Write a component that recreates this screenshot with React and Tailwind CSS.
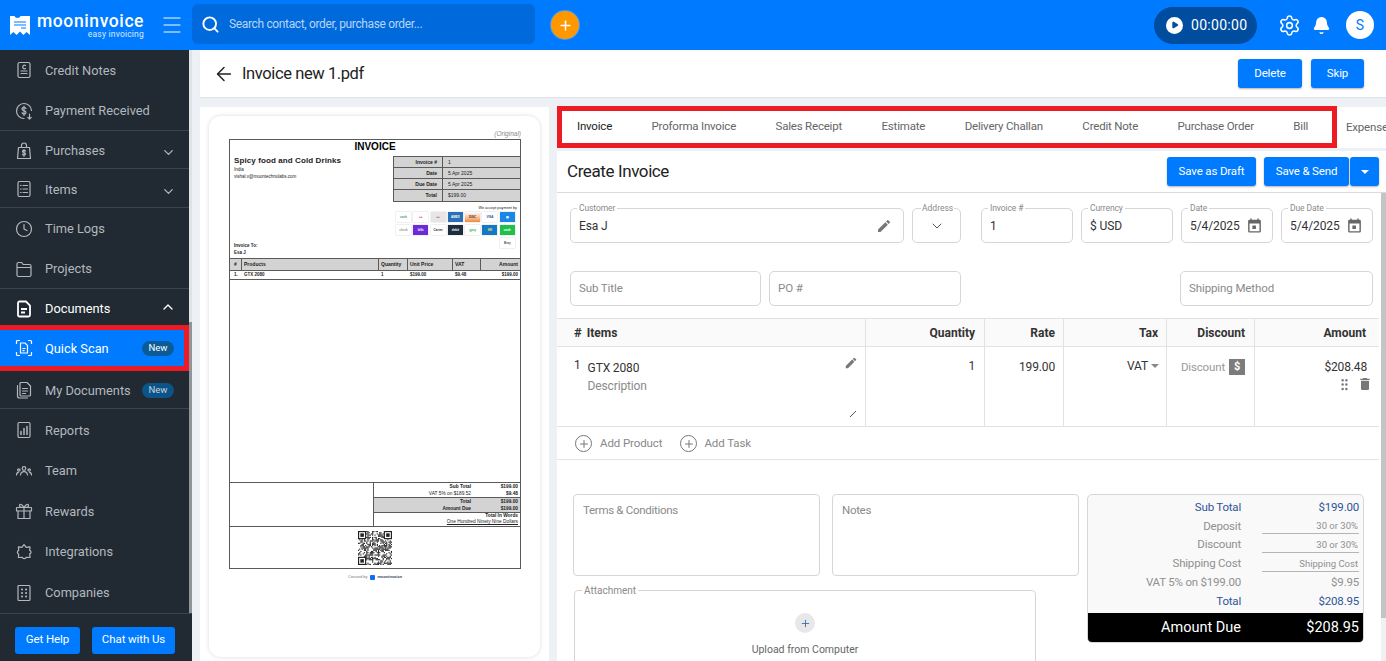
import React from "react";
import {
  ArrowLeft,
  Bell,
  ChevronDown,
  ChevronUp,
  GripVertical,
  Menu,
  Play,
  Plus,
  Search,
  Settings,
} from "lucide-react";

const Ico = ({ children, size = 20, className = "" }) => (
  <svg
    width={size}
    height={size}
    viewBox="0 0 20 20"
    fill="none"
    stroke="currentColor"
    strokeWidth="1.2"
    strokeLinecap="round"
    strokeLinejoin="round"
    className={className}
  >
    {children}
  </svg>
);

const Mat = ({ d, size = 16, className = "" }) => (
  <svg width={size} height={size} viewBox="0 0 24 24" fill="currentColor" className={className}>
    <path d={d} />
  </svg>
);

const EDIT =
  "M3 17.25V21h3.75L17.81 9.94l-3.75-3.75L3 17.25zM20.71 7.04a1 1 0 0 0 0-1.41l-2.34-2.34a1 1 0 0 0-1.41 0l-1.83 1.83 3.75 3.75 1.83-1.83z";
const EVENT =
  "M19 4h-1V2h-2v2H8V2H6v2H5a2 2 0 0 0-2 2v14a2 2 0 0 0 2 2h14a2 2 0 0 0 2-2V6a2 2 0 0 0-2-2zm0 16H5V9h14v11zM9 12h5v5H9z";
const TRASH = "M6 19c0 1.1.9 2 2 2h8c1.1 0 2-.9 2-2V7H6v12zM19 4h-3.5l-1-1h-5l-1 1H5v2h14V4z";

const icons = {
  credit: (
    <Ico>
      <rect x="4" y="2.5" width="12" height="15" rx="1.5" />
      <path d="M11.5 5.5a1.8 1.8 0 1 0 0 3M7 11h6M7 13.5h6" />
    </Ico>
  ),
  payment: (
    <Ico>
      <path d="M17.5 9.5A7.5 7.5 0 1 0 10 17.5" />
      <path d="M12 7.5c-.4-.8-1.1-1.2-2-1.2-1.2 0-2 .6-2 1.6s.8 1.4 2 1.7 2 .8 2 1.8-.9 1.6-2 1.6c-.9 0-1.7-.4-2-1.2M10 5v9.5M15.5 13v5M13.8 16.4l1.7 1.6 1.7-1.6" />
    </Ico>
  ),
  purchases: (
    <Ico>
      <path d="M4.5 6.5h11l1 11h-13zM7.5 6.5V4.5a2.5 2.5 0 0 1 5 0v2" />
      <path d="M11.5 10c-.3-.5-.8-.8-1.5-.8-.9 0-1.5.5-1.5 1.2s.6 1 1.5 1.2 1.5.6 1.5 1.3-.7 1.2-1.5 1.2c-.7 0-1.2-.3-1.5-.9M10 8.5v6.8" />
    </Ico>
  ),
  items: (
    <Ico>
      <rect x="4" y="2.5" width="12" height="15" rx="1.5" />
      <path d="M6.5 6.5h.6M9 6.5h4.5M6.5 10h.6M9 10h4.5M6.5 13.5h.6M9 13.5h4.5" />
    </Ico>
  ),
  time: (
    <Ico>
      <circle cx="10" cy="10" r="7.5" />
      <path d="M10 5.5V10l3 1.5" />
    </Ico>
  ),
  projects: (
    <Ico>
      <path d="M3 16V5a1.5 1.5 0 0 1 1.5-1.5h3.2l1.5 2h6.3A1.5 1.5 0 0 1 17 7v9a1.5 1.5 0 0 1-1.5 1.5h-11A1.5 1.5 0 0 1 3 16zM3 8.5h14" />
    </Ico>
  ),
  documents: (
    <svg width="20" height="20" viewBox="0 0 20 20" fill="none">
      <path d="M5 2.5h7l4 4V16a1.5 1.5 0 0 1-1.5 1.5h-9A1.5 1.5 0 0 1 4 16V4a1.5 1.5 0 0 1 1-1.5z" stroke="#fff" strokeWidth="1.8" />
      <path d="M7 10h6M7 13.5h4" stroke="#fff" strokeWidth="1.8" />
    </svg>
  ),
  scan: (
    <svg width="20" height="20" viewBox="0 0 20 20" fill="none" stroke="#fff" strokeWidth="1.2">
      <path d="M2.5 6V3.5a1 1 0 0 1 1-1H6M14 2.5h2.5a1 1 0 0 1 1 1V6M17.5 14v2.5a1 1 0 0 1-1 1H14M6 17.5H3.5a1 1 0 0 1-1-1V14" />
      <path d="M6.5 5H11l2.5 2.5V15h-7zM8.5 10.5h3M8.5 12.7h2" />
    </svg>
  ),
  mydocs: (
    <Ico>
      <path d="M7 2.5h6L16.5 6v9a1 1 0 0 1-1 1H7a1 1 0 0 1-1-1V3.5a1 1 0 0 1 1-1zM3.5 5.5V16a2 2 0 0 0 2 2h8M8.5 8.5h5M8.5 11h5M8.5 13.5h3" />
    </Ico>
  ),
  reports: (
    <Ico>
      <rect x="4" y="2.5" width="12" height="15" rx="1.2" />
      <path d="M7 14.5v-3M10 14.5v-6M13 14.5v-8" strokeWidth="1.5" />
    </Ico>
  ),
  team: (
    <Ico>
      <circle cx="10" cy="7.5" r="1.8" />
      <circle cx="4.8" cy="9" r="1.2" />
      <circle cx="15.2" cy="9" r="1.2" />
      <path d="M6.5 14c.2-2.2 1.6-3.3 3.5-3.3s3.3 1.1 3.5 3.3M2.5 14c0-1.5.7-2.5 2-2.7M17.5 14c0-1.5-.7-2.5-2-2.7" />
    </Ico>
  ),
  rewards: (
    <Ico>
      <rect x="2.5" y="6.5" width="15" height="3.5" rx=".6" />
      <path d="M4 10v7.5h12V10M10 6.5v11M10 6.5C8 3 5.5 2.5 5.5 4.7c0 1.3 2 1.8 4.5 1.8zM10 6.5c2-3.5 4.5-4 4.5-1.8 0 1.3-2 1.8-4.5 1.8z" />
    </Ico>
  ),
  integrations: (
    <Ico>
      <path d="M10 2.5l2.2 2.8 3.8-.5-.3 3.6c1.8.6 1.8 3 0 3.5l.3 3.6-3.8-.2c-.6 1.7-3.4 1.7-4 0l-3.8.2.3-3.3c-1.8-.6-1.8-3.2 0-3.8l-.3-3.6 3.5.5z" />
    </Ico>
  ),
  companies: (
    <Ico>
      <rect x="4" y="2.5" width="12" height="15" rx="1" />
      <path d="M8 6.5h.1M12 6.5h.1M8 10h.1M12 10h.1M8 13.5h.1M12 13.5h.1" strokeWidth="2" />
    </Ico>
  ),
};

const Row = ({ icon, label, border, h = "h-[40.6px]", pt = "pt-[1px]", chevron, badge }) => (
  <div
    className={`flex items-center shrink-0 pl-[14px] pr-[13px] text-[12.8px] text-[#b3b8bd] ${h} ${pt} ${
      border ? "border-b border-[#3b444e]" : ""
    }`}
  >
    <span className="w-[31px] shrink-0">{icons[icon]}</span>
    <span className="flex-1 whitespace-nowrap">{label}</span>
    {badge && (
      <span className="rounded-full bg-[#0b5488] text-[#c5d3df] text-[9.5px] h-[15px] w-[32px] mr-[2px] flex items-center justify-center">
        New
      </span>
    )}
    {chevron && <ChevronDown size={15} className="mt-1" />}
  </div>
);

function Sidebar() {
  return (
    <aside className="w-[192px] shrink-0 flex flex-col bg-[#212a33] font-['Roboto',sans-serif]">
      <div className="flex flex-1 min-h-0">
        <nav className="w-[189px] flex flex-col overflow-hidden">
          <Row icon="credit" label="Credit Notes" pt="pt-0" />
          <Row icon="payment" label="Payment Received" border />
          <Row icon="purchases" label="Purchases" border chevron h="h-[38px]" pt="pt-[2px]" />
          <Row icon="items" label="Items" border chevron h="h-[39px]" pt="pt-[2px]" />
          <Row icon="time" label="Time Logs" />
          <Row icon="projects" label="Projects" border />
          <div className="h-[36px] shrink-0 flex items-center pt-[3px] pl-[14px] pr-[13px] text-[12.8px] text-white">
            <span className="w-[31px]">{icons.documents}</span>
            <span className="flex-1">Documents</span>
            <ChevronUp size={16} className="-mt-1" />
          </div>
          <div className="h-[46px] shrink-0 border-[5px] border-l-0 border-[#ed1c24] bg-[#007bff] flex items-center pl-[14px] pr-[10px] text-[12.8px] text-white">
            <span className="w-[31px]">{icons.scan}</span>
            <span className="flex-1">Quick Scan</span>
            <span className="rounded-full bg-[#0b5c96] text-white text-[9.5px] h-[15px] w-[32px] flex items-center justify-center">
              New
            </span>
          </div>
          <Row icon="mydocs" label="My Documents" border badge h="h-[38px]" />
          <Row icon="reports" label="Reports" />
          <Row icon="team" label="Team" />
          <Row icon="rewards" label="Rewards" />
          <Row icon="integrations" label="Integrations" />
          <Row icon="companies" label="Companies" pt="pt-[2px]" />
        </nav>
        <div className="w-[3px] flex flex-col">
          <div className="h-[272px] bg-[#dfe3e8]" />
          <div className="flex-1 bg-[#8f9499]" />
        </div>
      </div>
      <div className="h-[48px] shrink-0 border-t border-[#3b444e] flex items-center pt-[5px] pl-[15px] gap-[12px] text-[11.5px] tracking-[-0.1px] text-white">
        <button className="w-[65px] h-[27px] rounded-[3px] bg-[#007bff]">Get Help</button>
        <button className="w-[83px] h-[27px] rounded-[3px] bg-[#007bff]">Chat with Us</button>
      </div>
    </aside>
  );
}

function Header() {
  return (
    <header className="h-[50px] shrink-0 bg-[#007bff] flex items-center font-['Roboto',sans-serif] text-white">
      <svg width="20" height="21" viewBox="0 0 20 21" className="ml-[10px] mt-[1px]">
        <path d="M0 1h4.5C5 2 6 3 7.5 3S10 2 10.5 1H20v19l-3.5-3-3 3L10 16.5 6.5 20l-3-3L0 20z" fill="#fff" />
        <path d="M4 7h12M4 10h12M11 13h5" stroke="#007bff" strokeWidth="1.2" />
      </svg>
      <div className="ml-[7px] w-[116px] leading-none">
        <div className="text-[17.5px] font-medium tracking-[0.6px] leading-[17px] mt-[1px]">mooninvoice</div>
        <div className="text-[8.5px] text-right pr-[9px] tracking-[0.2px] leading-[9px] text-[#dbeaff]">
          easy invoicing
        </div>
      </div>
      <Menu size={24} strokeWidth={1} className="ml-[7px]" />
      <div className="ml-[8px] -mt-[2px] w-[343px] h-[40px] rounded-[6px] bg-[#0069dc] flex items-center pl-[9px]">
        <Search size={19} strokeWidth={2.4} />
        <span className="ml-[9px] text-[12px] tracking-[-0.35px] text-[#b7d5f8]">Search contact, order, purchase order...</span>
      </div>
      <div className="ml-[16px] w-[28px] h-[28px] rounded-full bg-[#ff9800] flex items-center justify-center shadow-[0_0_0_1px_rgba(255,255,255,.25)]">
        <Plus size={15} strokeWidth={2.4} />
      </div>
      <div className="ml-auto w-[103px] h-[37px] rounded-full bg-[#004d9f] flex items-center pl-[12px]">
        <span className="w-[17px] h-[17px] rounded-full bg-white flex items-center justify-center">
          <Play size={8} fill="#004d9f" stroke="#004d9f" />
        </span>
        <span className="ml-[8px] text-[14px] tracking-[0.3px]">00:00:00</span>
      </div>
      <Settings size={23} strokeWidth={1.6} className="ml-[21px]" />
      <Bell size={19} fill="#fff" strokeWidth={1.5} className="ml-[11px]" />
      <div className="ml-[15px] mr-[12px] w-[28px] h-[28px] rounded-full bg-white text-[#007bff] text-[14px] flex items-center justify-center">
        S
      </div>
    </header>
  );
}

// tiny payment logos on the scanned pdf
const cards = [
  ["bg-white text-[#3a9d8f]", "cash"],
  ["bg-white text-[#c33]", "●●"],
  ["bg-[#e6e6e6] text-[#e2401b]", "●●"],
  ["bg-[#2a70b8] text-white", "AMEX"],
  ["bg-gradient-to-b from-white to-[#f08a2c] text-[#333]", "DISC"],
  ["bg-white text-[#2a4a9a]", "VISA"],
  ["bg-[#1a86e8] text-white", "▣"],
  ["bg-white text-[#999]", "check"],
  ["bg-[#6c2bd9] text-white", "bills"],
  ["bg-white text-[#234]", "Cartes"],
  ["bg-[#1d2d3e] text-white", "debit"],
  ["bg-white text-[#3fb56a]", "gpay"],
  ["bg-[#1478c8] text-[#ffe24a]", "HK"],
  ["bg-[#1fbf4c] text-white", "cash"],
];

const Card = ({ c, t }) => (
  <div className={`w-[15px] h-[10px] flex items-center justify-center text-[3px] font-bold overflow-hidden shadow-[0_0_1px_rgba(0,0,0,.35)] ${c}`}>
    {t}
  </div>
);

function QR() {
  const n = 29;
  const cells = [];
  let s = 97;
  const finder = (x, y) => x < 7 && y < 7;
  for (let y = 0; y < n; y++) {
    for (let x = 0; x < n; x++) {
      s = (s * 1103515245 + 12345) & 0x7fffffff;
      const inF = finder(x, y) || finder(n - 1 - x, y) || finder(x, n - 1 - y);
      if (!inF && (s >> 16) % 2 === 0) cells.push(<rect key={x + "-" + y} x={x} y={y} width="1" height="1" />);
    }
  }
  const F = ({ x, y }) => (
    <g>
      <rect x={x} y={y} width="7" height="7" />
      <rect x={x + 1} y={y + 1} width="5" height="5" fill="#fff" />
      <rect x={x + 2} y={y + 2} width="3" height="3" />
    </g>
  );
  return (
    <svg width="34" height="34" viewBox="0 0 29 29" fill="#222">
      {cells}
      <F x={0} y={0} />
      <F x={22} y={0} />
      <F x={0} y={22} />
    </svg>
  );
}

function PdfDoc() {
  const grey = "bg-[#d3d3d3]";
  const line = "border-[#5a5a5a]";
  return (
    <div className="w-[292px] pt-[13px] font-['Liberation_Sans',sans-serif] text-[#222]">
      <div className="text-right text-[6.5px] italic text-[#888] h-[10px] leading-[10px]">(Original)</div>
      <div className={`h-[430px] border ${line} flex flex-col`}>
        <div className="h-[16px] text-center text-[10px] font-bold leading-[13px] text-black">INVOICE</div>
        <div className="h-[102px] flex">
          <div className="flex-1 pl-[4px] flex flex-col">
            <div className="text-[8px] font-bold leading-[10px] tracking-[0.1px]">Spicy food and Cold Drinks</div>
            <div className="text-[4.5px] leading-[6.5px] mt-[1px]">India</div>
            <div className="text-[4.5px] leading-[6.5px]">vishal.v@moontechnolabs.com</div>
            <div className="mt-auto mb-[2px] text-[4.5px] font-bold leading-[7px]">
              Invoice To:
              <br />
              Esa J
            </div>
          </div>
          <div className="w-[127px]">
            <div className={`border-l border-b border-t ${line} ${grey}`}>
              {[
                ["Invoice #", "1"],
                ["Date", "5 Apr 2025"],
                ["Due Date", "5 Apr 2025"],
                ["Total", "$199.00"],
              ].map(([a, b], i) => (
                <div key={a} className={`flex h-[11px] text-[5px] leading-[10px] ${i < 3 ? `border-b ${line}` : ""}`}>
                  <div className={`w-[49px] text-right pr-[5px] font-bold border-r ${line}`}>{a}</div>
                  <div className="pl-[5px]">{b}</div>
                </div>
              ))}
            </div>
            <div className="text-right text-[3.8px] pr-[3px] mt-[3px] leading-[6px]">We accept payment by</div>
            <div className="grid grid-cols-[repeat(7,15px)] gap-x-[2.3px] gap-y-[3px] pl-[3px] mt-[1px]">
              {cards.map(([c, t], i) => (
                <Card key={i} c={c} t={t} />
              ))}
              <div className="col-start-7">
                <Card c="bg-white text-[#555]" t="Bray" />
              </div>
            </div>
          </div>
        </div>
        <div className={`grid grid-cols-[12px_137px_29px_45px_28px_1fr] h-[13px] ${grey} border-y ${line} text-[5px] font-bold leading-[11px]`}>
          <div className={`text-center border-r ${line}`}>#</div>
          <div className={`pl-[2px] border-r ${line}`}>Products</div>
          <div className={`pl-[2px] border-r ${line}`}>Quantity</div>
          <div className={`pl-[2px] border-r ${line}`}>Unit Price</div>
          <div className={`pl-[2px] border-r ${line}`}>VAT</div>
          <div className="text-right pr-[2px]">Amount</div>
        </div>
        <div className={`grid grid-cols-[12px_137px_29px_45px_28px_1fr] h-[9px] border-b ${line} text-[4.5px] font-bold leading-[8px]`}>
          <div className="text-center">1.</div>
          <div className="pl-[2px]">GTX 2080</div>
          <div className="pl-[2px]">1</div>
          <div className="pl-[2px]">$199.00</div>
          <div className="pl-[2px]">$9.48</div>
          <div className="text-right pr-[2px]">$199.00</div>
        </div>
        <div className="flex-1" />
        <div className={`h-[44px] border-t ${line} flex`}>
          <div className={`flex-1 border-r ${line}`} />
          <div className="w-[146px] flex flex-col text-[4.8px] leading-[6px] font-bold">
            <div className={`h-[15px] border-b ${line} pt-[1px] grid grid-cols-[97px_1fr] text-right pr-[2px]`}>
              <div>Sub Total</div>
              <div>$199.00</div>
              <div className="font-normal">VAT 5% on $189.52</div>
              <div>$9.48</div>
            </div>
            <div className={`h-[15px] border-b ${line} ${grey} pt-[1px] grid grid-cols-[97px_1fr] text-right pr-[2px]`}>
              <div>Total</div>
              <div>$199.00</div>
              <div>Amount Due</div>
              <div>$199.00</div>
            </div>
            <div className="flex-1 text-right pr-[2px] whitespace-nowrap">
              Total In Words
              <div className="font-normal underline">One Hundred Ninety Nine Dollars</div>
            </div>
          </div>
        </div>
        <div className={`h-[42px] border-t ${line} flex justify-center items-center`}>
          <QR />
        </div>
      </div>
      <div className="mt-[5px] flex justify-center items-center gap-[2px] text-[4px] text-[#777]">
        Created by
        <span className="w-[5px] h-[5px] bg-[#0d6efd] rounded-[1px] ml-[1px]" />
        <span className="font-bold text-[#345]">mooninvoice</span>
      </div>
    </div>
  );
}

const Field = ({ label, w, value, right, ml = "" }) => (
  <div className={`relative h-[35px] shrink-0 rounded-[5px] border border-[#d6d6d6] flex items-center pl-[8px] pr-[10px] text-[12px] tracking-[-0.1px] text-[#333] ${w} ${ml}`}>
    {label && (
      <span className="absolute -top-[6px] left-[6px] bg-white px-[2px] text-[8.5px] leading-[10px] text-[#8a8a8a]">
        {label}
      </span>
    )}
    <span className="flex-1 whitespace-nowrap">{value}</span>
    {right}
  </div>
);

const Placeholder = ({ w, text, ml = "" }) => (
  <div className={`h-[35px] shrink-0 rounded-[5px] border border-[#d6d6d6] flex items-center px-[8px] text-[11.5px] tracking-[-0.1px] text-[#8a8a8a] ${w} ${ml}`}>
    {text}
  </div>
);

const Btn = ({ w, children, ml = "" }) => (
  <button className={`h-[29px] rounded-[3px] bg-[#007bff] text-white text-[11.5px] tracking-[-0.15px] shadow-[0_1px_2px_rgba(0,0,0,.3)] ${w} ${ml}`}>
    {children}
  </button>
);

const SumRow = ({ label, value, blue, line }) => (
  <div className={`h-[18.8px] grid grid-cols-[153px_97px] gap-x-[21px] items-center text-right text-[11.5px] tracking-[-0.2px] ${blue ? "text-[#2f5597]" : "text-[#909090]"}`}>
    <span className="whitespace-nowrap">{label}</span>
    {line ? (
      <span className="h-[16px] leading-[15px] border-b border-[#b5b5b5] text-[9.5px] tracking-normal pr-[1px]">{value}</span>
    ) : (
      <span>{value}</span>
    )}
  </div>
);

function InvoiceForm() {
  return (
    <div className="flex-1 min-w-0 flex flex-col font-['Roboto',sans-serif]">
      <div className="h-[41px] shrink-0 bg-white flex items-start text-[11.5px] tracking-[-0.2px] text-[#666]">
        <div className="w-[780px] h-[42px] -mt-[1.5px] shrink-0 border-[5px] border-[#ed1c24] flex items-center pl-[15px] gap-[39.5px] whitespace-nowrap">
          <span className="text-[#222]">Invoice</span>
          <span>Proforma Invoice</span>
          <span>Sales Receipt</span>
          <span>Estimate</span>
          <span>Delivery Challan</span>
          <span>Credit Note</span>
          <span>Purchase Order</span>
          <span>Bill</span>
        </div>
        <span className="ml-[9px] self-center whitespace-nowrap">Expense</span>
      </div>
      <div className="h-[3px] shrink-0" />
      <div className="flex-1 min-h-0 bg-white flex flex-col">
        <div className="h-[42px] shrink-0 border-b border-[#dcdcdc] flex items-center pl-[10px] pr-[7px]">
          <span className="text-[17px] tracking-[-0.4px] text-[#222] flex-1">Create Invoice</span>
          <Btn w="w-[89px]">Save as Draft</Btn>
          <Btn w="w-[85px]" ml="ml-[8px]">Save &amp; Send</Btn>
          <button className="ml-[1px] w-[29px] h-[29px] rounded-[3px] bg-[#007bff] flex items-center justify-center shadow-[0_1px_2px_rgba(0,0,0,.3)]">
            <span className="border-x-[4px] border-t-[4px] border-x-transparent border-t-white" />
          </button>
        </div>
        <div className="flex-1 min-h-0 flex">
          <div className="w-[822px] shrink-0">
            <div className="flex pl-[13px] pt-[15px]">
              <Field label="Customer" w="w-[334px]" value="Esa J" right={<Mat d={EDIT} size={16} className="text-[#777] mr-[1px]" />} />
              <div className="relative ml-[8px] w-[49px] h-[35px] rounded-[5px] border border-[#d6d6d6] flex items-center justify-center text-[#555]">
                <span className="absolute -top-[6px] left-[8px] bg-white px-[1px] text-[8.5px] leading-[10px] text-[#8a8a8a]">Address</span>
                <ChevronDown size={16} strokeWidth={1.5} />
              </div>
              <Field label="Invoice #" w="w-[92px]" ml="ml-[20px]" value="1" />
              <Field label="Currency" w="w-[92px]" ml="ml-[8px]" value="$ USD" />
              <Field label="Date" w="w-[92px]" ml="ml-[8px]" value="5/4/2025" right={<Mat d={EVENT} size={17} className="text-[#666] -mr-[1px]" />} />
              <Field label="Due Date" w="w-[92px]" ml="ml-[8px]" value="5/4/2025" right={<Mat d={EVENT} size={17} className="text-[#666] -mr-[1px]" />} />
            </div>
            <div className="flex pl-[13px] mt-[28px]">
              <Placeholder w="w-[191px]" text="Sub Title" />
              <Placeholder w="w-[192px]" ml="ml-[8px]" text="PO #" />
              <Placeholder w="w-[193px]" ml="ml-[219px]" text="Shipping Method" />
            </div>
            <div className="mt-[12px] grid grid-cols-[309px_119px_79px_103px_88px_124px] h-[29px] bg-[#fafafa] border-y border-[#e2e2e2] text-[12px] font-bold text-[#333] items-center">
              <div className="h-full flex items-center pl-[17px] border-r border-[#e2e2e2]">
                <span className="text-[13px] mr-[5px]">#</span>Items
              </div>
              <div className="h-full flex items-center justify-end pr-[9px] border-r border-[#e2e2e2]">Quantity</div>
              <div className="h-full flex items-center justify-end pr-[8px] border-r border-[#e2e2e2]">Rate</div>
              <div className="h-full flex items-center justify-end pr-[8px] border-r border-[#e2e2e2]">Tax</div>
              <div className="h-full flex items-center justify-end pr-[9px] border-r border-[#e2e2e2]">Discount</div>
              <div className="h-full flex items-center justify-end pr-[13px]">Amount</div>
            </div>
            <div className="grid grid-cols-[309px_119px_79px_103px_88px_124px] h-[80px] border-b border-[#e2e2e2] text-[12px] tracking-[-0.15px] text-[#333]">
              <div className="relative border-r border-[#e2e2e2] pl-[17px] pt-[10px] flex">
                <span className="mr-[7px] leading-[16px]">1</span>
                <div className="pt-[1px]">
                  <div className="leading-[20px]">GTX 2080</div>
                  <div className="text-[#8a8a8a] leading-[18px] mt-[-1px]">Description</div>
                </div>
                <Mat d={EDIT} size={14} className="absolute right-[7px] top-[9px] text-[#777]" />
                <span className="absolute right-[9px] bottom-[9px] w-[6px] h-[6px] bg-[linear-gradient(135deg,transparent_45%,#555_45%,#555_55%,transparent_55%)]" />
              </div>
              <div className="border-r border-[#e2e2e2] text-right pr-[9px] pt-[11px] leading-[16px]">1</div>
              <div className="border-r border-[#e2e2e2] text-right pr-[8px] pt-[12px] leading-[16px]">199.00</div>
              <div className="border-r border-[#e2e2e2] pr-[7px] pt-[11px] leading-[16px] flex justify-end items-start">
                VAT
                <span className="ml-[3px] mt-[6px] border-x-[4px] border-t-[4px] border-x-transparent border-t-[#888]" />
              </div>
              <div className="border-r border-[#e2e2e2] pr-[9px] pt-[12px] flex justify-end items-start">
                <span className="text-[#999] text-[11.5px] leading-[16px] mr-[4px]">Discount</span>
                <span className="w-[16px] h-[16px] bg-[#7c7c7c] text-white text-[11px] font-bold flex items-center justify-center">$</span>
              </div>
              <div className="pr-[12px] pt-[12px] flex flex-col items-end">
                <span className="leading-[16px]">$208.48</span>
                <span className="flex items-center gap-[5px] mt-[1px] text-[#777] -mr-[6px]">
                  <GripVertical size={15} />
                  <Mat d={TRASH} size={16} />
                </span>
              </div>
            </div>
            <div className="h-[33px] pt-[1px] border-b border-[#e2e2e2] flex items-center pl-[18px] text-[11.5px] tracking-[-0.1px] text-[#888]">
              <span className="w-[17px] h-[17px] rounded-full border border-[#777] flex items-center justify-center text-[#777]">
                <Plus size={12} />
              </span>
              <span className="ml-[8px]">Add Product</span>
              <span className="ml-[18px] w-[17px] h-[17px] rounded-full border border-[#777] flex items-center justify-center text-[#777]">
                <Plus size={12} />
              </span>
              <span className="ml-[7px]">Add Task</span>
            </div>
            <div className="flex pl-[16px] pt-[34px]">
              <div className="w-[506px] shrink-0">
                <div className="flex gap-[12px] text-[11.5px] tracking-[-0.3px] text-[#8a8a8a]">
                  <div className="w-[247px] h-[82px] rounded-[4px] border border-[#d6d6d6] px-[9px] pt-[7px]">Terms &amp; Conditions</div>
                  <div className="w-[247px] h-[82px] rounded-[4px] border border-[#d6d6d6] px-[9px] pt-[7px]">Notes</div>
                </div>
                <div className="relative mt-[14px] ml-[1px] w-[462px] h-[90px] rounded-[4px] border border-[#d6d6d6] flex flex-col items-center pt-[22px]">
                  <span className="absolute -top-[6px] left-[7px] bg-white px-[2px] text-[10px] leading-[11px] text-[#8a8a8a]">Attachment</span>
                  <span className="w-[20px] h-[20px] rounded-full bg-[#e8e8e8] flex items-center justify-center text-[#3d6fb5]">
                    <Plus size={11} />
                  </span>
                  <span className="mt-[9px] text-[10.5px] text-[#666]">Upload from Computer</span>
                </div>
              </div>
              <div className="ml-[8px] w-[277px] h-[149px] rounded-[5px] border border-[#d6d6d6] bg-[#f9f9f9] overflow-hidden flex flex-col pt-[3px]">
                <SumRow label="Sub Total" value="$199.00" blue />
                <SumRow label="Deposit" value="30 or 30%" line />
                <SumRow label="Discount" value="30 or 30%" line />
                <SumRow label="Shipping Cost" value="Shipping Cost" line />
                <SumRow label="VAT 5% on $199.00" value="$9.95" />
                <SumRow label="Total" value="$208.95" blue />
                <div className="mt-auto h-[29px] bg-black text-white text-[14.5px] grid grid-cols-[153px_97px] gap-x-[21px] items-center text-right">
                  <span>Amount Due</span>
                  <span>$208.95</span>
                </div>
              </div>
            </div>
          </div>
          <div className="ml-[2px] flex-1 flex flex-col">
            <div className="h-[425px] shrink-0 bg-[#c4c4c4]" />
            <div className="flex-1 bg-[#f1f1f1]" />
          </div>
        </div>
      </div>
    </div>
  );
}

export default function App() {
  return (
    <div className="h-screen w-full overflow-hidden flex flex-col bg-[#edf1f6]">
      <Header />
      <div className="flex flex-1 min-h-0">
        <Sidebar />
        <main className="flex-1 min-w-0 pl-[8px] flex flex-col">
          <div className="h-[47px] shrink-0 bg-white flex items-center pl-[13px] pr-[22px] font-['Roboto',sans-serif] shadow-[0_1px_1px_rgba(0,0,0,.06)]">
            <ArrowLeft size={22} strokeWidth={1.6} className="text-[#222]" />
            <span className="ml-[7px] pt-[1px] text-[16.5px] tracking-[-0.4px] text-[#222] flex-1">Invoice new 1.pdf</span>
            <Btn w="w-[64px]">Delete</Btn>
            <Btn w="w-[53px]" ml="ml-[9px]">Skip</Btn>
          </div>
          <div className="flex-1 min-h-0 mt-[10px] flex gap-[8px]">
            <div className="w-[349px] shrink-0 bg-white p-[9px] pb-[4px]">
              <div className="h-full rounded-[12px] shadow-[0_0_4px_rgba(0,0,0,.15)] bg-white pl-[20px]">
                <PdfDoc />
              </div>
            </div>
            <InvoiceForm />
          </div>
        </main>
      </div>
    </div>
  );
}
